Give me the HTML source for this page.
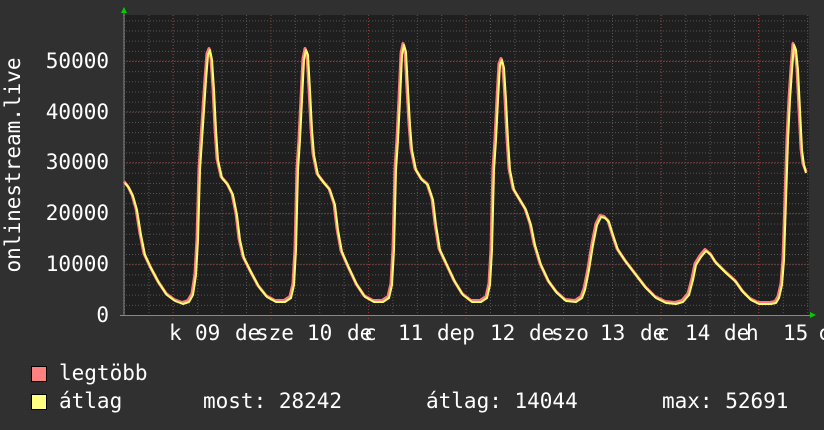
<!DOCTYPE html>
<html><head><meta charset="utf-8"><style>
html,body{margin:0;padding:0;background:#303030;}
svg{display:block}
text{font-family:"DejaVu Sans Mono","Liberation Mono",monospace;font-size:21px;fill:#ffffff}
</style></head><body>
<svg width="824" height="430" viewBox="0 0 824 430" xmlns="http://www.w3.org/2000/svg">
<defs>
<pattern id="vmin" x="124" y="0" width="24.4" height="430" patternUnits="userSpaceOnUse">
<line x1="0.5" y1="0" x2="0.5" y2="430" stroke="#555" stroke-dasharray="1,2"/>
</pattern>
<pattern id="hmin" x="0" y="315" width="824" height="10.16" patternUnits="userSpaceOnUse">
<line x1="0" y1="0.5" x2="824" y2="0.5" stroke="#555" stroke-dasharray="1,2"/>
</pattern>
</defs>
<rect x="0" y="0" width="824" height="430" fill="#303030"/>
<rect x="124" y="15" width="685" height="301" fill="#1f1f1f"/>
<rect x="124" y="15" width="685" height="301" fill="url(#vmin)"/>
<rect x="124" y="15" width="685" height="301" fill="url(#hmin)"/>
<g stroke="#8a3a3a" stroke-dasharray="1,2">
<line x1="124" y1="264.2" x2="809" y2="264.2"/>
<line x1="124" y1="213.4" x2="809" y2="213.4"/>
<line x1="124" y1="162.6" x2="809" y2="162.6"/>
<line x1="124" y1="111.8" x2="809" y2="111.8"/>
<line x1="124" y1="61" x2="809" y2="61"/>
<line x1="173" y1="15" x2="173" y2="320"/>
<line x1="271" y1="15" x2="271" y2="320"/>
<line x1="368.5" y1="15" x2="368.5" y2="320"/>
<line x1="466" y1="15" x2="466" y2="320"/>
<line x1="563.5" y1="15" x2="563.5" y2="320"/>
<line x1="661" y1="15" x2="661" y2="320"/>
<line x1="758.5" y1="15" x2="758.5" y2="320"/>
</g>
<line x1="124" y1="12" x2="124" y2="316" stroke="#888"/>
<line x1="120" y1="315.5" x2="812" y2="315.5" stroke="#888"/>
<polygon points="121,13 127,13 124,7" fill="#00cc00"/>
<polygon points="810,312 810,318 816,315" fill="#00cc00"/>
<g fill="none" stroke-linejoin="round">
<polyline transform="translate(0,-1.5)" stroke="#ff7a7a" stroke-width="3" points="124,183 128,188 132,196 136,210 140,235 144,255 150,268 158,283 166,295 174,301 182,304 188,302 192,295 195,275 197,240 199,170 201,140 203,110 205,80 207,55 209,50 211,60 213,90 215,130 217,160 221,178 227,185 232,195 236,215 239,240 243,258 250,272 258,287 266,297 275,302 284,302 290,298 293,285 295,250 297,170 299,140 301,100 303,60 305,50 307,55 309,90 311,130 313,155 317,175 323,183 329,190 334,205 337,230 341,252 348,268 356,285 364,297 373,302 382,302 388,298 391,285 393,250 395,170 397,140 399,100 401,55 403,45 405,52 407,90 409,125 411,150 415,170 421,180 427,185 432,200 435,225 439,250 446,265 454,282 462,295 471,302 480,302 486,298 489,285 491,250 493,170 495,140 497,100 499,65 501,60 503,68 505,100 507,140 509,170 513,190 519,200 525,210 530,225 534,245 540,265 548,282 556,293 565,301 575,302 581,298 584,290 588,270 592,245 596,225 600,217 604,218 608,222 612,235 617,250 625,262 635,275 645,288 655,298 665,303 675,304 682,302 688,295 692,280 695,265 700,257 705,251 710,255 715,263 725,273 735,282 742,292 750,300 758,304 770,304 775,303 778,298 781,285 783,260 785,200 787,140 789,100 791,70 793,45 795,50 797,70 799,110 801,150 803,165 806,173"/>
<polyline transform="translate(1,0)" stroke="#ffff70" stroke-width="2" points="124,183 128,188 132,196 136,210 140,235 144,255 150,268 158,283 166,295 174,301 182,304 188,302 192,295 195,275 197,240 199,170 201,140 203,110 205,80 207,55 209,50 211,60 213,90 215,130 217,160 221,178 227,185 232,195 236,215 239,240 243,258 250,272 258,287 266,297 275,302 284,302 290,298 293,285 295,250 297,170 299,140 301,100 303,60 305,50 307,55 309,90 311,130 313,155 317,175 323,183 329,190 334,205 337,230 341,252 348,268 356,285 364,297 373,302 382,302 388,298 391,285 393,250 395,170 397,140 399,100 401,55 403,45 405,52 407,90 409,125 411,150 415,170 421,180 427,185 432,200 435,225 439,250 446,265 454,282 462,295 471,302 480,302 486,298 489,285 491,250 493,170 495,140 497,100 499,65 501,60 503,68 505,100 507,140 509,170 513,190 519,200 525,210 530,225 534,245 540,265 548,282 556,293 565,301 575,302 581,298 584,290 588,270 592,245 596,225 600,217 604,218 608,222 612,235 617,250 625,262 635,275 645,288 655,298 665,303 675,304 682,302 688,295 692,280 695,265 700,257 705,251 710,255 715,263 725,273 735,282 742,292 750,300 758,304 770,304 775,303 778,298 781,285 783,260 785,200 787,140 789,100 791,70 793,45 795,50 797,70 799,110 801,150 803,165 805,173"/>
</g>
<g text-anchor="end">
<text x="109" y="322">0</text>
<text x="109" y="271">10000</text>
<text x="109" y="220">20000</text>
<text x="109" y="169">30000</text>
<text x="109" y="119">40000</text>
<text x="109" y="68">50000</text>
</g>
<text transform="translate(20,165) rotate(-90)" text-anchor="middle">onlinestream.live</text>
<g>
<text x="169" y="340">k</text>
<text x="195" y="340">09</text>
<text x="235" y="340">de</text>
<text x="256" y="340">sze</text>
<text x="307" y="340">10</text>
<text x="347" y="340">de</text>
<text x="364" y="340">c</text>
<text x="398" y="340">11</text>
<text x="437" y="340">dep</text>
<text x="490" y="340">12</text>
<text x="529" y="340">de</text>
<text x="551" y="340">szo</text>
<text x="600" y="340">13</text>
<text x="640" y="340">de</text>
<text x="657" y="340">c</text>
<text x="685" y="340">14</text>
<text x="724" y="340">de</text>
<text x="746" y="340">h</text>
<text x="783" y="340">15</text>
<text x="818" y="340">c</text>
</g>
<rect x="31.5" y="366.5" width="15" height="15" fill="#ff8080" stroke="#000"/>
<rect x="31.5" y="394.5" width="15" height="15" fill="#ffff80" stroke="#000"/>
<text x="59" y="380">legtöbb</text>
<text x="59" y="408">átlag</text>
<text x="203" y="408">most: 28242</text>
<text x="426" y="408">átlag: 14044</text>
<text x="662" y="408">max: 52691</text>
</svg>
</body></html>
